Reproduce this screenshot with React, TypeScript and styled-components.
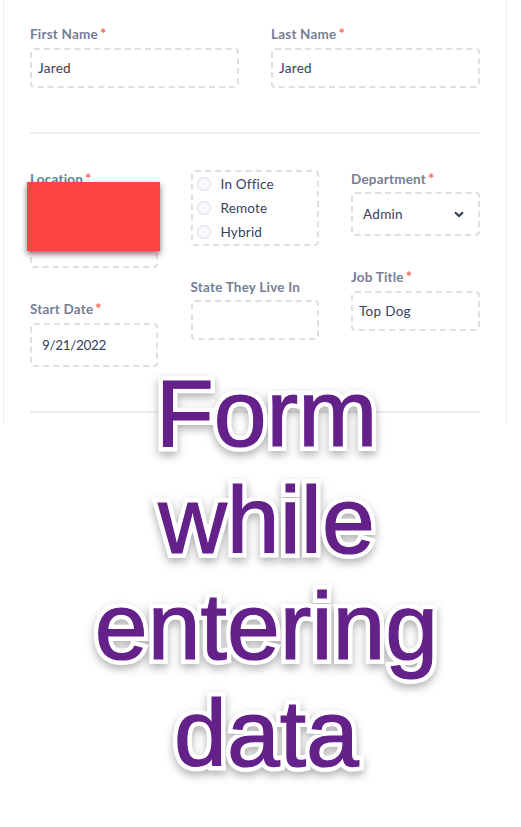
import React from "react";
import styled, { createGlobalStyle } from "styled-components";

const Global = createGlobalStyle`
  html, body { margin: 0; padding: 0; background: #fff; }
  body { width: 521px; height: 827px; overflow: hidden; position: relative; font-family: "Lato", "Noto Sans", sans-serif; }
`;

const Card = styled.main`
  box-sizing: border-box;
  width: 504px;
  height: 424px;
  margin-left: 3px;
  padding: 25px 26px 0;
  border-left: 1px solid #eeeef1;
  border-right: 1px solid #eeeef1;
  background: #fff;
  display: flex;
  flex-direction: column;
`;

const TwoCols = styled.section`
  display: grid;
  grid-template-columns: 209px 209px;
  column-gap: 32px;
`;

const ThreeCols = styled.section`
  display: grid;
  grid-template-columns: 128px 128px 129px;
  column-gap: 32.5px;
`;

const Column = styled.div`
  display: flex;
  flex-direction: column;
  position: relative;
`;

const Field = styled.div<{ $mt?: number }>`
  display: flex;
  flex-direction: column;
  margin-top: ${(p) => p.$mt ?? 0}px;
`;

const Label = styled.label<{ $h?: number }>`
  font-size: 13.5px;
  font-weight: 700;
  line-height: 18px;
  height: ${(p) => p.$h ?? 23}px;
  color: #767e95;
  letter-spacing: 0.2px;
  white-space: nowrap;
`;

const Req = styled.span`
  color: #f76b5c;
  margin-left: 2px;
  font-size: 15px;
  line-height: 0;
`;

const Box = styled.div<{ $h: number; $pl?: number; $tight?: boolean }>`
  box-sizing: border-box;
  height: ${(p) => p.$h}px;
  padding-left: ${(p) => p.$pl ?? 6}px;
  border: 2px dashed #dfdfe6;
  border-radius: 4px;
  display: flex;
  align-items: center;
  font-size: 13.5px;
  letter-spacing: ${(p) => (p.$tight ? "-0.35px" : "0.3px")};
  color: #34405e;
`;

const SelectBox = styled(Box)`
  justify-content: space-between;
  padding-right: 14px;
`;

const Divider = styled.hr<{ $mt: number }>`
  width: 100%;
  height: 2px;
  border: 0;
  margin: ${(p) => p.$mt}px 0 0;
  background: #ececf1;
  flex: none;
`;

const RadioGroup = styled.div`
  box-sizing: border-box;
  height: 76px;
  border: 2px dashed #dfdfe6;
  border-radius: 4px;
  padding: 0 0 0 4px;
  display: flex;
  flex-direction: column;
  justify-content: center;
`;

const RadioRow = styled.div`
  display: flex;
  align-items: center;
  height: 24px;
  gap: 10px;
  font-size: 13.5px;
  letter-spacing: 0.2px;
  color: #34405e;
`;

const RadioDot = styled.span`
  box-sizing: border-box;
  width: 14px;
  height: 14px;
  border-radius: 50%;
  border: 1.5px solid #dcdee6;
  background: #f7f8fb;
`;

const Redaction = styled.div`
  position: absolute;
  left: -3px;
  top: 48px;
  width: 133px;
  height: 69px;
  background: #ff4444;
  box-shadow: 0 3px 6px rgba(0, 0, 0, 0.55);
`;

const Caption = styled.h1`
  position: absolute;
  left: 0;
  top: 360px;
  width: 533px;
  margin: 0;
  text-align: center;
  font-family: "Liberation Sans", Arial, sans-serif;
  font-size: 95px;
  font-weight: 400;
  line-height: 106.5px;
  color: #64218a;
  -webkit-text-stroke: 10px #fff;
  paint-order: stroke fill;
  filter: drop-shadow(0 4px 4px rgba(0, 0, 0, 0.3));

  &::after {
    content: "Form\\A while\\A entering\\A data";
    white-space: pre;
    position: absolute;
    inset: 0;
    -webkit-text-stroke: 1.2px #64218a;
  }
`;

const Chevron = () => (
  <svg width="10" height="7" viewBox="0 0 10 7" fill="none" stroke="#2c3a5c" strokeWidth="2" aria-hidden="true">
    <path d="M1 1.2 L5 5 L9 1.2" />
  </svg>
);

const Required = ({ children, h }: { children: React.ReactNode; h?: number }) => (
  <Label $h={h}>
    {children}
    <Req>*</Req>
  </Label>
);

export default function App() {
  return (
    <>
      <Global />
      <Card>
        <TwoCols>
          <Field>
            <Required>First Name</Required>
            <Box $h={40}>Jared</Box>
          </Field>
          <Field>
            <Required>Last Name</Required>
            <Box $h={40}>Jared</Box>
          </Field>
        </TwoCols>
        <Divider $mt={44} />
        <ThreeCols>
          <Column>
            <Field $mt={36}>
              <Required>Location</Required>
              <Box $h={75} />
            </Field>
            <Field $mt={32}>
              <Required>Start Date</Required>
              <Box $h={44} $pl={10} $tight>9/21/2022</Box>
            </Field>
            <Redaction />
          </Column>
          <Column>
            <Field $mt={36}>
              <RadioGroup>
                <RadioRow><RadioDot />In Office</RadioRow>
                <RadioRow><RadioDot />Remote</RadioRow>
                <RadioRow><RadioDot />Hybrid</RadioRow>
              </RadioGroup>
            </Field>
            <Field $mt={32}>
              <Label $h={22}>State They Live In</Label>
              <Box $h={40} />
            </Field>
          </Column>
          <Column>
            <Field $mt={36}>
              <Required h={22}>Department</Required>
              <SelectBox $h={44} $pl={10}>
                Admin
                <Chevron />
              </SelectBox>
            </Field>
            <Field $mt={32}>
              <Required>Job Title</Required>
              <Box $h={40}>Top Dog</Box>
            </Field>
          </Column>
        </ThreeCols>
        <Divider $mt={44} />
      </Card>
      <Caption>
        Form
        <br />
        while
        <br />
        entering
        <br />
        data
      </Caption>
    </>
  );
}
